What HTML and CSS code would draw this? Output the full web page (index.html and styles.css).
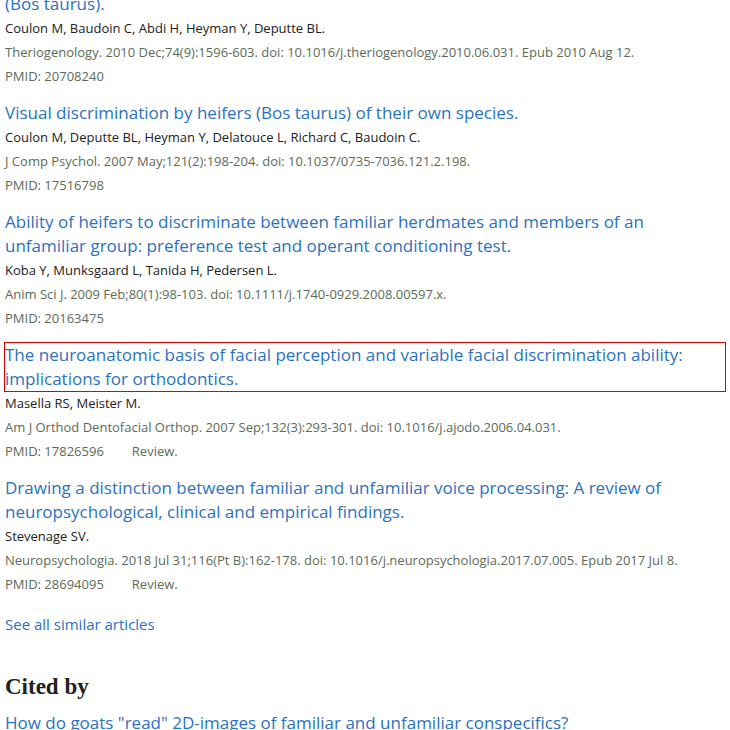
FILE: index.html
```html
<!DOCTYPE html>
<html>
<head>
<meta charset="utf-8">
<link rel="stylesheet" href="styles.css">
</head>
<body>
<div class="page">
  <ul class="docsums">
    <li class="docsum first">
      <a class="title" href="#">(Bos taurus).</a>
      <div class="authors">Coulon M, Baudoin C, Abdi H, Heyman Y, Deputte BL.</div>
      <div class="citation">Theriogenology. 2010 Dec;74(9):1596-603. doi: 10.1016/j.theriogenology.2010.06.031. Epub 2010 Aug 12.</div>
      <div class="citation">PMID: 20708240</div>
    </li>
    <li class="docsum">
      <a class="title" href="#">Visual discrimination by heifers (Bos taurus) of their own species.</a>
      <div class="authors">Coulon M, Deputte BL, Heyman Y, Delatouce L, Richard C, Baudoin C.</div>
      <div class="citation">J Comp Psychol. 2007 May;121(2):198-204. doi: 10.1037/0735-7036.121.2.198.</div>
      <div class="citation">PMID: 17516798</div>
    </li>
    <li class="docsum">
      <a class="title" href="#">Ability of heifers to discriminate between familiar herdmates and members of an unfamiliar group: preference test and operant conditioning test.</a>
      <div class="authors">Koba Y, Munksgaard L, Tanida H, Pedersen L.</div>
      <div class="citation">Anim Sci J. 2009 Feb;80(1):98-103. doi: 10.1111/j.1740-0929.2008.00597.x.</div>
      <div class="citation">PMID: 20163475</div>
    </li>
    <li class="docsum">
      <a class="title focused" href="#">The neuroanatomic basis of facial perception and variable facial discrimination ability: implications for orthodontics.</a>
      <div class="authors">Masella RS, Meister M.</div>
      <div class="citation">Am J Orthod Dentofacial Orthop. 2007 Sep;132(3):293-301. doi: 10.1016/j.ajodo.2006.04.031.</div>
      <div class="citation">PMID: 17826596<span class="pubtype">Review.</span></div>
    </li>
    <li class="docsum">
      <a class="title" href="#">Drawing a distinction between familiar and unfamiliar voice processing: A review of neuropsychological, clinical and empirical findings.</a>
      <div class="authors">Stevenage SV.</div>
      <div class="citation">Neuropsychologia. 2018 Jul 31;116(Pt B):162-178. doi: 10.1016/j.neuropsychologia.2017.07.005. Epub 2017 Jul 8.</div>
      <div class="citation">PMID: 28694095<span class="pubtype">Review.</span></div>
    </li>
  </ul>
  <a class="see-all" href="#">See all similar articles</a>
  <h2 class="section-title">Cited by</h2>
  <a class="title" href="#">How do goats "read" 2D-images of familiar and unfamiliar conspecifics?</a>
</div>
</body>
</html>
```
FILE: styles.css
```css
html, body {
  margin: 0;
  padding: 0;
  background: #fff;
}
body {
  font-family: "Open Sans", "Noto Sans", sans-serif;
  color: #212121;
  overflow: hidden;
  height: 730px;
}
.page {
  padding: 0 5px;
  margin-top: -8px;
}
.docsums {
  list-style: none;
  margin: 0;
  padding: 0;
  display: flex;
  flex-direction: column;
  gap: 13px;
}
.title {
  display: block;
  font-size: 17px;
  line-height: 24px;
  color: #2a72bf;
  text-decoration: none;
}
.title.focused {
  outline: 1px solid #e00000;
  outline-offset: 0;
}
.authors {
  font-size: 13px;
  line-height: 24px;
  color: #212121;
}
.citation {
  font-size: 13px;
  line-height: 24px;
  color: #5c6b58;
}
.pubtype {
  margin-left: 28px;
}
.see-all {
  display: block;
  margin-top: 16px;
  font-size: 15px;
  line-height: 24px;
  color: #2a72bf;
  text-decoration: none;
}
.section-title {
  font-family: "Liberation Serif", "DejaVu Serif", serif;
  font-size: 23px;
  line-height: 28px;
  font-weight: bold;
  margin: 37px 0 10px;
  color: #212121;
}
```
